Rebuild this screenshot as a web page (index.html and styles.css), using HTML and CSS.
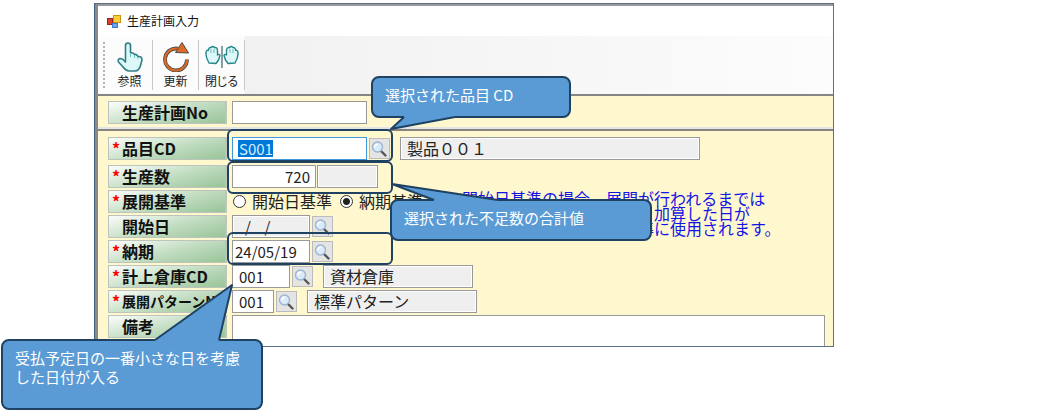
FILE: index.html
```html
<!DOCTYPE html>
<html lang="ja">
<head>
    <meta charset="UTF-8">
    <meta name="viewport" content="width=device-width, initial-scale=1.0">
    <title>生産計画入力</title>
    <link rel="stylesheet" href="styles.css">
</head>
<body>
    <!-- Shared icon -->
    <svg class="defs" width="0" height="0">
        <symbol id="lens" viewBox="0 0 16 16">
            <path d="M10 10 L14.5 14.5" stroke="#555" stroke-width="2.4" stroke-linecap="round"/>
            <circle cx="6.5" cy="6" r="5" fill="#d8ebfb" stroke="#9fb4cf" stroke-width="1.4"/>
            <path d="M3.8 6.5 A3 3 0 0 1 7 3.2" fill="none" stroke="#fff" stroke-width="1.5"/>
        </symbol>
    </svg>

    <main class="window">
        <header class="title-bar">
            <svg width="14" height="13" viewBox="0 0 14 13">
                <rect x="0.5" y="3.5" width="5" height="6" fill="#d8402c" stroke="#9c2418"/>
                <rect x="5.5" y="8.5" width="5" height="4" fill="#6fa5ee" stroke="#3d78d0"/>
                <rect x="6.5" y="0.5" width="7" height="7" fill="#fbce3e" stroke="#c89414"/>
            </svg>
            <h1>生産計画入力</h1>
        </header>

        <nav class="toolbar">
            <span class="grip"></span>
            <button type="button" class="tool">
                <svg width="26" height="32" viewBox="0 -2 26 32">
                    <path d="M8.500 18 V3.500 Q8.500 1 11 1 Q13.500 1 13.500 3.500 V11 Q16 10 17.500 12.500 Q20 12 21 14.500 Q25 14 25 18 L23.500 23.500 Q22 29 18 29 H12 Q9 29 6.500 25.500 L1.500 20 Q0.500 17 3 16.500 Q6 16.500 8.500 20 Z" fill="#dcf8f8" stroke="#2f7f86" stroke-width="1.600" stroke-linejoin="round"/>
                    <path d="M13.500 11 V15 M17.500 13 V16 M21 15 V17" stroke="#6cc4c8" fill="none"/>
                </svg>
                参照
            </button>
            <button type="button" class="tool">
                <svg width="26" height="32" viewBox="0 -2 26 32">
                    <path d="M15 6.700 A11 11 0 1 0 24 17.500" fill="none" stroke="#4a4a44" stroke-width="3.800"/>
                    <path d="M15 6.700 A11 11 0 1 0 24 17.500" fill="none" stroke="#dd6b28" stroke-width="2.200"/>
                    <path d="M19 0.500 L25.500 11 L12.500 10.500 Z" fill="#dd6b28" stroke="#4a4a44" stroke-linejoin="round"/>
                </svg>
                更新
            </button>
            <button type="button" class="tool">
                <svg width="34" height="32" viewBox="0 -2 34 32">
                    <g id="palm" fill="#dcf8f8" stroke="#27858c" stroke-width="1.4" stroke-linejoin="round">
                        <path d="M4 21 Q0.500 15 1 10.500 Q1.500 7.500 3.200 8.500 Q4 5 6 5.500 Q8 3.500 9.500 5.500 Q12.500 5 12.500 9 V13 Q14.500 11.500 15 13.500 L13.500 18 L11 21.500 Z"/>
                        <path d="M6 7 V11 M9 7 V11" stroke="#70bcc0" stroke-width="1"/>
                    </g>
                    <use href="#palm" transform="translate(34 0) scale(-1 1)"/>
                    <path d="M17 4 V26" stroke="#547880" stroke-width="1.4"/>
                </svg>
                閉じる
            </button>
        </nav>

        <form>
            <section class="panel head">
                <div class="row">
                    <label class="caption" for="planNo">生産計画No</label>
                    <input type="text" id="planNo" class="code">
                </div>
            </section>

            <section class="panel body">
                <div class="row first">
                    <label class="caption" for="itemCd"><span class="req">*</span>品目CD</label>
                    <input type="text" id="itemCd" class="code selected" value="S001">
                    <button type="button" class="search" aria-label="品目検索"><svg><use href="#lens"/></svg></button>
                    <input type="text" class="name long" aria-label="品目名" value="製品００１" readonly>
                </div>
                <div class="row">
                    <label class="caption" for="qty"><span class="req">*</span>生産数</label>
                    <input type="text" id="qty" class="qty" value="720">
                    <input type="text" class="unit" aria-label="単位" readonly>
                </div>
                <div class="row">
                    <span class="caption"><span class="req">*</span>展開基準</span>
                    <label class="choice"><input type="radio" name="base">開始日基準</label>
                    <label class="choice"><input type="radio" name="base" checked>納期基準</label>
                    <p class="note">開始日基準の場合、展開が行われるまでは
　　　　　　　　　　　を加算した日が
　　　　　　　　　　　準に使用されます。</p>
                </div>
                <div class="row">
                    <label class="caption" for="startDate">開始日</label>
                    <input type="text" id="startDate" class="date" value="   /    /" readonly>
                    <button type="button" class="search" aria-label="開始日検索"><svg><use href="#lens"/></svg></button>
                </div>
                <div class="row">
                    <label class="caption" for="dueDate"><span class="req">*</span>納期</label>
                    <input type="text" id="dueDate" class="date" value="24/05/19">
                    <button type="button" class="search" aria-label="納期検索"><svg><use href="#lens"/></svg></button>
                </div>
                <div class="row">
                    <label class="caption" for="storeCd"><span class="req">*</span>計上倉庫CD</label>
                    <input type="text" id="storeCd" class="store" value="001">
                    <button type="button" class="search" aria-label="倉庫検索"><svg><use href="#lens"/></svg></button>
                    <input type="text" class="name short" aria-label="倉庫名" value="資材倉庫" readonly>
                </div>
                <div class="row">
                    <label class="caption small" for="patternNo"><span class="req">*</span>展開パターンNo</label>
                    <input type="text" id="patternNo" class="pattern" value="001">
                    <button type="button" class="search" aria-label="パターン検索"><svg><use href="#lens"/></svg></button>
                    <input type="text" class="name medium" aria-label="パターン名" value="標準パターン" readonly>
                </div>
                <div class="row last">
                    <label class="caption" for="memo">備考</label>
                    <textarea id="memo"></textarea>
                </div>
            </section>
        </form>
    </main>

    <!-- Frames round the fields -->
    <div class="frame frame-item"></div>
    <div class="frame frame-qty"></div>
    <div class="frame frame-due"></div>

    <!-- Callouts -->
    <aside class="callout callout-item">
        選択された品目 CD
        <svg class="tail" width="70" height="16" viewBox="0 0 70 16">
            <path d="M15 0 V2 L2 14 L66 2 V0 Z" fill="#5b9bd5"/>
            <path d="M15 2 L2 14 L66 2" class="edge"/>
        </svg>
    </aside>
    <aside class="callout callout-qty">
        選択された不足数の合計値
        <svg class="tail" width="110" height="21" viewBox="0 0 110 21">
            <path d="M44 21 V18 L2 2 L108 18 V21 Z" fill="#5b9bd5"/>
            <path d="M44 18 L2 2 L108 18" class="edge"/>
        </svg>
    </aside>
    <aside class="callout callout-due">
        受払予定日の一番小さな日を考慮<br>した日付が入る
        <svg class="tail" width="82" height="60" viewBox="0 0 82 60">
            <path d="M2 60 V57 L79 2 L66 57 V60 Z" fill="#5b9bd5"/>
            <path d="M2 57 L79 2 L66 57" class="edge"/>
        </svg>
    </aside>
</body>
</html>
```

FILE: styles.css
```css
* {
    box-sizing: border-box;
}

body {
    margin: 0;
    min-height: 100vh;
    padding-top: 3px;
    background-color: white;
    font-family: "Noto Sans CJK JP", sans-serif;
    font-size: 15px;
    color: #222;
    position: relative;
}

input, textarea, button {
    font: inherit;
    color: inherit;
    margin: 0;
    border-radius: 0;
}

.defs {
    position: absolute;
}

/* Application window */
.window {
    margin: 0 226px 0 94px;
    border: 1px solid #5c7088;
    border-left-color: #44607e;
    box-shadow: inset 3px 0 #8a8a8a, inset 0 2px #999;
    padding: 3px 0 0 3px;
}

.title-bar {
    display: flex;
    align-items: center;
    gap: 6px;
    height: 29px;
    padding-left: 9px;
    background-color: white;
}

h1 {
    margin: 0;
    font-size: 12px;
    font-weight: normal;
    line-height: 16px;
    padding-bottom: 2px;
    color: #111;
}

.toolbar {
    display: flex;
    align-items: center;
    height: 58px;
    padding-left: 5px;
    background: linear-gradient(to right, #fcfcfc 146px, #f1f1f1 147px, #fcfcfc);
}

.grip {
    width: 2px;
    height: 46px;
    margin-right: 2px;
    background: repeating-linear-gradient(#b4b4b4 0 2px, transparent 2px 4px);
}

.tool {
    display: flex;
    flex-direction: column;
    align-items: center;
    width: 46px;
    height: 50px;
    padding: 0;
    border: none;
    border-right: 1px solid #c8c8c8;
    background: none;
    font-size: 12px;
    line-height: 18px;
    font-feature-settings: "palt";
}

.tool svg {
    flex: none;
}

/* Form */
.panel {
    padding: 5px 8px 0 10px;
    background-color: #fff8ce;
    border-top: 2px solid #858585;
}

.head {
    padding-bottom: 3px;
    border-bottom: 2px solid #e4e4e4;
}

.body {
    padding-top: 6px;
}

.row {
    display: flex;
    height: 23px;
    margin-bottom: 2px;
}

.first {
    margin-bottom: 5px;
}

.head .row {
    margin-bottom: 0;
}

.last {
    height: 31px;
    margin-bottom: 0;
}

.caption {
    flex: none;
    position: relative;
    width: 119px;
    height: 23px;
    margin-right: 5px;
    padding-left: 13px;
    overflow: hidden;
    border: 1px solid #bcc4bc;
    border-right: 2px solid #bcc4bc;
    background: linear-gradient(165deg, #f6faf6 5%, #c4dec4 50%, #98c498);
    font-size: 16px;
    font-weight: bold;
    line-height: 21px;
    white-space: nowrap;
    color: #111;
}

.small {
    font-size: 14px;
}

.req {
    position: absolute;
    left: 3px;
    top: 0;
    font-size: 16px;
    line-height: 21px;
    color: red;
}

.row input[type="text"], textarea {
    height: 23px;
    padding: 0 6px 1px;
    border: 1px solid #999;
    background-color: white;
    outline: none;
}

.row input[type="text"]:read-only {
    background-color: #efefef;
    box-shadow: inset 0 0 0 1px white;
}

input.code {
    width: 135px;
}

.row input.selected {
    border-color: #3c9adc;
    color: #d8ecff;
    background-image: linear-gradient(#0078d7, #0078d7);
    background-size: 35px 17px;
    background-position: 5px 2px;
    background-repeat: no-repeat;
}

.row input.qty {
    width: 84px;
    margin-right: 1px;
    padding-right: 5px;
    text-align: right;
}

input.unit {
    width: 61px;
}

.row input.date {
    width: 78px;
    padding: 0 2px 1px;
}

input.store {
    width: 58px;
}

input.pattern {
    width: 42px;
}

.row input.name {
    padding: 0 6px 2px;
    font-size: 16px;
}

input.long {
    width: 300px;
}

input.medium {
    width: 170px;
}

input.short {
    width: 150px;
}

.search {
    width: 21px;
    height: 21px;
    margin: 1px 10px 0 2px;
    padding: 1px;
    border: 1px solid #bbb;
    background-color: #e4e4e4;
}

.search svg {
    display: block;
    width: 16px;
    height: 16px;
}

.choice {
    display: flex;
    align-items: center;
    margin-right: 7px;
    font-size: 16px;
    line-height: 23px;
    white-space: nowrap;
}

.choice input {
    appearance: none;
    width: 13px;
    height: 13px;
    margin: 0 6px 0 1px;
    border: 1px solid #333;
    border-radius: 50%;
    background-color: white;
}

.choice input:checked {
    background: radial-gradient(circle, #222 3px, white 4px);
}

.note {
    margin: 1px 0 0 32px;
    font-size: 16px;
    line-height: 15px;
    white-space: pre;
    color: #1414e6;
}

textarea {
    flex: 1;
    resize: none;
}

.row textarea {
    height: 31px;
    border-bottom: none;
}

/* Overlays */
.frame {
    position: absolute;
    left: 227px;
    width: 166px;
    height: 33px;
    border: 2px solid #1f4262;
    border-radius: 6px;
}

.frame-item {
    top: 129px;
}

.frame-qty {
    top: 161px;
}

.frame-due {
    top: 232px;
}

.callout {
    position: absolute;
    border: 2px solid #1f4262;
    border-radius: 8px;
    background-color: #5b9bd5;
    padding: 7px 12px;
    font-size: 15px;
    line-height: 19px;
    white-space: nowrap;
    color: white;
}

.callout-item {
    left: 371px;
    top: 76px;
    width: 200px;
    height: 42px;
}

.callout-qty {
    left: 390px;
    top: 199px;
    width: 262px;
    height: 42px;
}

.callout-due {
    left: 1px;
    top: 339px;
    width: 262px;
    height: 71px;
}

.tail {
    position: absolute;
}

.edge {
    fill: none;
    stroke: #1f4262;
    stroke-width: 2px;
    stroke-linejoin: round;
}

.callout-item .tail {
    left: 16px;
    top: 37px;
}

.callout-qty .tail {
    left: -2px;
    top: -19px;
}

.callout-due .tail {
    left: 150px;
    top: -58px;
}
```
